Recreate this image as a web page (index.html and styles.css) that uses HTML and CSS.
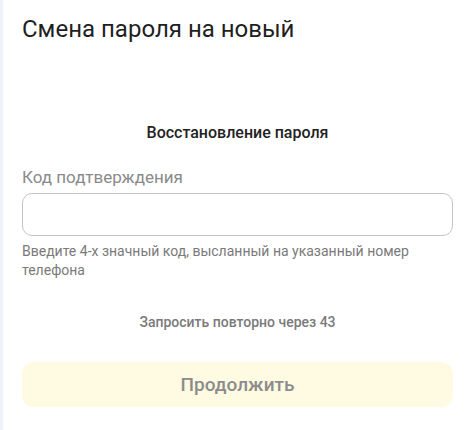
FILE: index.html
```html
<!DOCTYPE html>
<html lang="ru">
<head>
<meta charset="utf-8">
<link rel="stylesheet" href="styles.css">
</head>
<body>
<div class="page">
  <div class="strip"></div>
  <main class="content">
    <h1 class="title">Смена пароля на новый</h1>
    <h2 class="subtitle">Восстановление пароля</h2>
    <label class="label" for="code">Код подтверждения</label>
    <input class="input" id="code" type="text">
    <p class="hint">Введите 4-х значный код, высланный на указанный номер телефона</p>
    <p class="resend">Запросить повторно через 43</p>
    <button class="btn" type="button">Продолжить</button>
  </main>
</div>
</body>
</html>
```
FILE: styles.css
```css
* { box-sizing: border-box; }
html, body { margin: 0; padding: 0; background: #fff; }
body { font-family: Roboto, "Noto Sans", sans-serif; width: 472px; height: 430px; overflow: hidden; }
.page { display: flex; height: 430px; }
.strip { width: 3px; background: #eef2fb; flex: none; }
.content { flex: 1; display: flex; flex-direction: column; padding: 0 19px 0 19px; }
.title { margin: 15px 0 0; font-size: 24px; font-weight: 400; color: #1f1f1f; line-height: 28px; }
.subtitle { margin: 80px 0 0; font-size: 16px; font-weight: 500; color: #222; text-align: center; line-height: 20px; }
.label { margin-top: 24px; font-size: 17px; color: #8a8a8a; line-height: 20px; }
.input { margin-top: 6px; height: 43px; border: 1.5px solid #c4c4c4; border-radius: 10px; background: #fff; font: inherit; outline: none; }
.hint { margin: 6px 0 0; font-size: 14px; color: #7a7a7a; line-height: 18.5px; }
.resend { margin: 34px 0 0; font-size: 14px; font-weight: 500; color: #7a7a7a; text-align: center; line-height: 18px; }
.btn { margin-top: 31px; height: 45px; border: none; border-radius: 12px; background: #fffbe2; font-family: inherit; font-size: 19px; font-weight: 500; color: #8c8c8c; }
```
